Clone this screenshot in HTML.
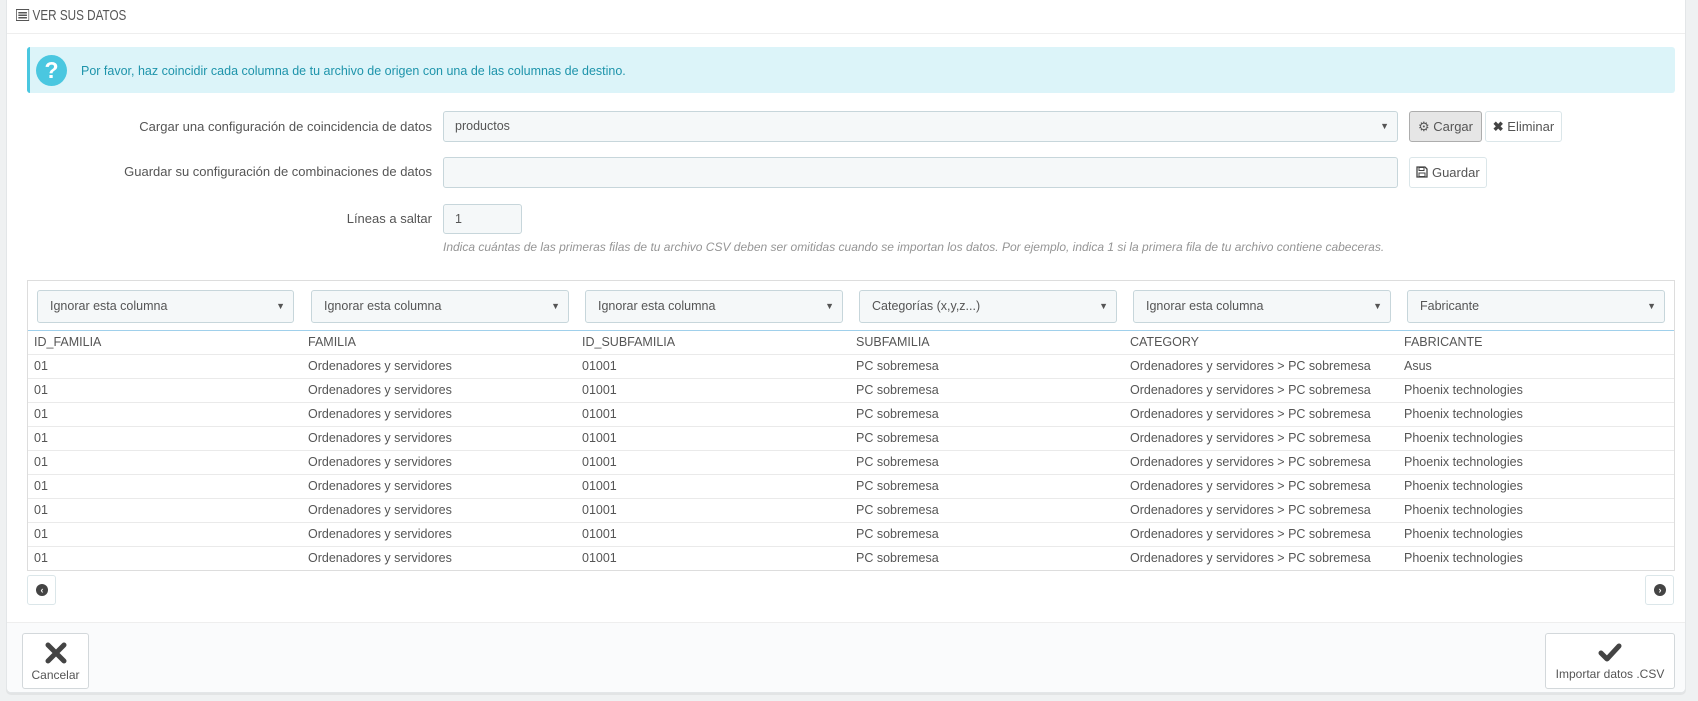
<!DOCTYPE html>
<html><head><meta charset="utf-8"><style>
*{box-sizing:border-box;margin:0;padding:0}
body{width:1698px;height:701px;background:#eff1f2;font-family:"Liberation Sans",sans-serif;color:#555;font-size:12.5px;position:relative;overflow:hidden}
.abs{position:absolute}
.panel{left:6px;top:0;width:1680px;height:693px;background:#fff;border:1px solid #e3e6e8;border-top:none;border-radius:0 0 5px 5px;box-shadow:0 2px 0 rgba(0,0,0,.05)}
.hd{left:16px;top:7px;font-size:15px;color:#555;transform:scaleX(.78);transform-origin:left;white-space:nowrap}
.hline{left:7px;top:33px;width:1678px;height:1px;background:#eee}
.alert{left:27px;top:47px;width:1648px;height:46px;background:#dcf4f9;border-left:3px solid #4ac7e0;border-radius:3px}
.q{left:36px;top:55px;width:31px;height:31px;border-radius:50%;background:#4ac7e0;color:#fff;font-weight:bold;font-size:23px;text-align:center;line-height:31px}
.atxt{left:81px;top:64px;color:#1e94ab;font-size:12.5px}
.lbl{text-align:right;width:320px;left:112px;font-size:13px;color:#555}
.inp{background:#f5f8f9;border:1px solid #c7d6db;border-radius:3px;font-size:12.5px;color:#555;padding-left:11px;line-height:29px}
.arrow{position:absolute;right:8px;top:0;font-size:9px;color:#555}
.btn{background:#fff;border:1px solid #dbe6e9;border-radius:3px;font-size:13px;color:#555;text-align:center;line-height:29px}
.help{left:443px;top:240px;font-style:italic;color:#959595;font-size:12px}
.tbl{left:27px;top:280px;width:1648px;height:291px;border:1px solid #ddd}
.sel{position:absolute;top:9px;height:33px;background:#f5f8f9;border:1px solid #c7d6db;border-radius:3px;font-size:12.5px;color:#555;padding-left:12px;line-height:31px}
.row{position:absolute;left:0;width:1646px;height:24px;border-top:1px solid #eaeaea;font-size:12.5px;line-height:22px}
.row span{position:absolute;left:6px}
.nav{width:29px;height:30px;background:#fff;border:1px solid #dbe6e9;border-radius:3px}
.nav i{position:absolute;left:8px;top:8px;width:12px;height:12px;border-radius:50%;background:#444;color:#fff;font-style:normal;font-size:9px;line-height:12px;text-align:center;font-weight:bold}
.foot{left:7px;top:622px;width:1678px;height:70px;background:#fafbfc;border-top:1px solid #eee;border-radius:0 0 5px 5px}
.fb{background:#fff;border:1px solid #d3d8db;border-radius:3px;font-size:12.5px;color:#555;text-align:center}
</style></head><body>
<div class="abs panel"></div>
<div class="abs hd"><svg width="17" height="12" viewBox="0 0 17 12" style="vertical-align:-1px"><rect x="0.5" y="0.5" width="16" height="11" fill="none" stroke="#555"/><rect x="3" y="3" width="11" height="1.5" fill="#555"/><rect x="3" y="5.5" width="11" height="1.5" fill="#555"/><rect x="3" y="8" width="11" height="1.5" fill="#555"/></svg> VER SUS DATOS</div>
<div class="abs hline"></div>
<div class="abs alert"></div>
<div class="abs q">?</div>
<div class="abs atxt">Por favor, haz coincidir cada columna de tu archivo de origen con una de las columnas de destino.</div>

<div class="abs lbl" style="top:119px">Cargar una configuración de coincidencia de datos</div>
<div class="abs inp" style="left:443px;top:111px;width:955px;height:31px">productos<span class="arrow">▼</span></div>
<div class="abs btn" style="left:1409px;top:111px;width:73px;height:31px;background:#e6e6e6;border-color:#adadad">⚙ Cargar</div>
<div class="abs btn" style="left:1485px;top:111px;width:77px;height:31px"><b style="color:#444">✖</b> Eliminar</div>

<div class="abs lbl" style="top:164px">Guardar su configuración de combinaciones de datos</div>
<div class="abs inp" style="left:443px;top:157px;width:955px;height:31px"></div>
<div class="abs btn" style="left:1409px;top:157px;width:78px;height:31px"><svg width="12" height="12" viewBox="0 0 12 12" style="vertical-align:-1px"><path d="M1 1h8l2 2v8H1z" fill="none" stroke="#444" stroke-width="1.3"/><rect x="3" y="1.5" width="5" height="3" fill="none" stroke="#444"/><rect x="3" y="7" width="6" height="3.5" fill="none" stroke="#444"/></svg> Guardar</div>

<div class="abs lbl" style="top:211px">Líneas a saltar</div>
<div class="abs inp" style="left:443px;top:204px;width:79px;height:30px">1</div>
<div class="abs help">Indica cuántas de las primeras filas de tu archivo CSV deben ser omitidas cuando se importan los datos. Por ejemplo, indica 1 si la primera fila de tu archivo contiene cabeceras.</div>

<div class="abs tbl">
<div class="sel" style="left:9px;width:257px">Ignorar esta columna<span class="arrow">▼</span></div>
<div class="sel" style="left:283px;width:258px">Ignorar esta columna<span class="arrow">▼</span></div>
<div class="sel" style="left:557px;width:258px">Ignorar esta columna<span class="arrow">▼</span></div>
<div class="sel" style="left:831px;width:258px">Categorías (x,y,z...)<span class="arrow">▼</span></div>
<div class="sel" style="left:1105px;width:258px">Ignorar esta columna<span class="arrow">▼</span></div>
<div class="sel" style="left:1379px;width:258px">Fabricante<span class="arrow">▼</span></div>
<div class="row" style="top:49px;border-top:1px solid #a0d0eb"><span>ID_FAMILIA</span><span style="left:280px">FAMILIA</span><span style="left:554px">ID_SUBFAMILIA</span><span style="left:828px">SUBFAMILIA</span><span style="left:1102px">CATEGORY</span><span style="left:1376px">FABRICANTE</span></div>
<div class="row" style="top:73px"><span>01</span><span style="left:280px">Ordenadores y servidores</span><span style="left:554px">01001</span><span style="left:828px">PC sobremesa</span><span style="left:1102px">Ordenadores y servidores &gt; PC sobremesa</span><span style="left:1376px">Asus</span></div>
<div class="row" style="top:97px"><span>01</span><span style="left:280px">Ordenadores y servidores</span><span style="left:554px">01001</span><span style="left:828px">PC sobremesa</span><span style="left:1102px">Ordenadores y servidores &gt; PC sobremesa</span><span style="left:1376px">Phoenix technologies</span></div>
<div class="row" style="top:121px"><span>01</span><span style="left:280px">Ordenadores y servidores</span><span style="left:554px">01001</span><span style="left:828px">PC sobremesa</span><span style="left:1102px">Ordenadores y servidores &gt; PC sobremesa</span><span style="left:1376px">Phoenix technologies</span></div>
<div class="row" style="top:145px"><span>01</span><span style="left:280px">Ordenadores y servidores</span><span style="left:554px">01001</span><span style="left:828px">PC sobremesa</span><span style="left:1102px">Ordenadores y servidores &gt; PC sobremesa</span><span style="left:1376px">Phoenix technologies</span></div>
<div class="row" style="top:169px"><span>01</span><span style="left:280px">Ordenadores y servidores</span><span style="left:554px">01001</span><span style="left:828px">PC sobremesa</span><span style="left:1102px">Ordenadores y servidores &gt; PC sobremesa</span><span style="left:1376px">Phoenix technologies</span></div>
<div class="row" style="top:193px"><span>01</span><span style="left:280px">Ordenadores y servidores</span><span style="left:554px">01001</span><span style="left:828px">PC sobremesa</span><span style="left:1102px">Ordenadores y servidores &gt; PC sobremesa</span><span style="left:1376px">Phoenix technologies</span></div>
<div class="row" style="top:217px"><span>01</span><span style="left:280px">Ordenadores y servidores</span><span style="left:554px">01001</span><span style="left:828px">PC sobremesa</span><span style="left:1102px">Ordenadores y servidores &gt; PC sobremesa</span><span style="left:1376px">Phoenix technologies</span></div>
<div class="row" style="top:241px"><span>01</span><span style="left:280px">Ordenadores y servidores</span><span style="left:554px">01001</span><span style="left:828px">PC sobremesa</span><span style="left:1102px">Ordenadores y servidores &gt; PC sobremesa</span><span style="left:1376px">Phoenix technologies</span></div>
<div class="row" style="top:265px"><span>01</span><span style="left:280px">Ordenadores y servidores</span><span style="left:554px">01001</span><span style="left:828px">PC sobremesa</span><span style="left:1102px">Ordenadores y servidores &gt; PC sobremesa</span><span style="left:1376px">Phoenix technologies</span></div>
</div>
<div class="abs nav" style="left:27px;top:575px"><i>‹</i></div>
<div class="abs nav" style="left:1645px;top:575px"><i>›</i></div>

<div class="abs foot"></div>
<div class="abs fb" style="left:22px;top:633px;width:67px;height:56px"><svg width="22" height="22" viewBox="0 0 22 22" style="margin-top:8px"><path d="M3 3L19 19M19 3L3 19" stroke="#444" stroke-width="5" stroke-linecap="round"/></svg><div style="font-size:12px;margin-top:1px">Cancelar</div></div>
<div class="abs fb" style="left:1545px;top:633px;width:130px;height:56px"><svg width="24" height="20" viewBox="0 0 24 20" style="margin-top:9px"><path d="M3 10L9 16L21 3" fill="none" stroke="#444" stroke-width="5" stroke-linecap="round" stroke-linejoin="round"/></svg><div style="font-size:12px;margin-top:1px">Importar datos .CSV</div></div>
</body></html>
